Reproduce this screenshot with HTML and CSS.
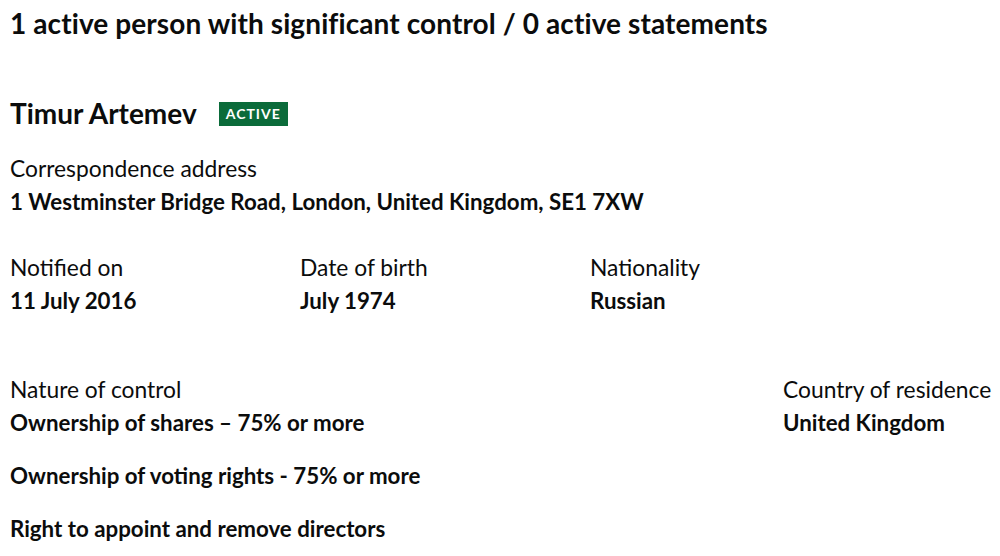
FILE: index.html
```html
<!DOCTYPE html>
<html lang="en">
<head>
<meta charset="utf-8">
<title>People with significant control</title>
<link rel="stylesheet" href="styles.css">
</head>
<body>
<main class="page">
  <h1 class="heading">1 active person with significant control / 0 active statements</h1>
  <section class="psc">
    <h2 class="psc-name">Timur Artemev <span class="status">ACTIVE</span></h2>
    <dl class="field">
      <dt class="label">Correspondence address</dt>
      <dd class="value">1 Westminster Bridge Road, London, United Kingdom, SE1 7XW</dd>
    </dl>
    <div class="row">
      <dl class="field col">
        <dt class="label">Notified on</dt>
        <dd class="value">11 July 2016</dd>
      </dl>
      <dl class="field col">
        <dt class="label">Date of birth</dt>
        <dd class="value">July 1974</dd>
      </dl>
      <dl class="field col">
        <dt class="label">Nationality</dt>
        <dd class="value">Russian</dd>
      </dl>
    </div>
    <div class="row control-row">
      <dl class="field control">
        <dt class="label">Nature of control</dt>
        <dd class="value">Ownership of shares – 75% or more</dd>
        <dd class="value">Ownership of voting rights - 75% or more</dd>
        <dd class="value">Right to appoint and remove directors</dd>
      </dl>
      <dl class="field residence">
        <dt class="label">Country of residence</dt>
        <dd class="value">United Kingdom</dd>
      </dl>
    </div>
  </section>
</main>
</body>
</html>
```
FILE: styles.css
```css
html, body {
  margin: 0;
  padding: 0;
  background: #ffffff;
}
body {
  font-family: Lato, "Liberation Sans", sans-serif;
  color: #0b0c0c;
}
.page {
  padding: 6px 10px 0 10px;
}
.heading {
  margin: 0;
  font-size: 28px;
  line-height: 34px;
  font-weight: 700;
  letter-spacing: 0.1px;
}
.psc {
  margin-top: 56px;
}
.psc-name {
  margin: 0;
  font-size: 28px;
  line-height: 34px;
  font-weight: 700;
  display: flex;
  align-items: center;
}
.status {
  margin: 2px 0 0 22px;
  background: #0b6b3a;
  color: #ffffff;
  font-size: 14px;
  font-weight: 700;
  line-height: 24px;
  padding: 0 7px;
  letter-spacing: 1px;
}
.field {
  margin: 0;
}
.label {
  font-size: 22.8px;
  line-height: 26px;
  font-weight: 400;
  white-space: nowrap;
}
.value {
  margin: 8px 0 0 0;
  font-size: 22.3px;
  line-height: 26px;
  font-weight: 700;
  white-space: nowrap;
}
.psc > .field {
  margin-top: 25px;
}
.row {
  display: flex;
  margin-top: 39px;
}
.col {
  width: 290px;
}
.control-row {
  margin-top: 62px;
  justify-content: space-between;
}
.control .value + .value {
  margin-top: 27px;
}
.residence {
  width: 207px;
}
```
